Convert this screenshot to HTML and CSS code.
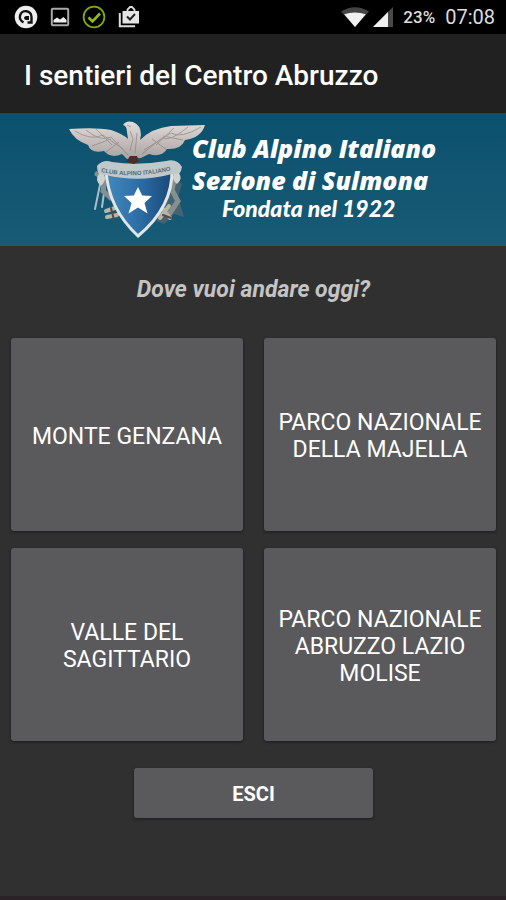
FILE: index.html
```html
<!DOCTYPE html>
<html lang="it">
<head>
<meta charset="utf-8">
<meta name="viewport" content="width=device-width, initial-scale=1">
<title>I sentieri del Centro Abruzzo</title>
<link rel="stylesheet" href="styles.css">
</head>
<body>
<div class="status">
  <div class="status-group notices">
    <svg width="24" height="24" viewBox="0 0 24 24"><circle cx="12" cy="12" r="11.300" fill="#eee"/><path d="M9.500 17.300A5.800 5.800 0 1 1 17.500 12V17.500H13.500" fill="none" stroke="#111" stroke-width="2.400"/><circle cx="12" cy="12.300" r="3.200" fill="#eee"/><path d="M12 11h3v4h-3q-2-.3-2-2t2-2z" fill="#111"/></svg>
    <svg width="20" height="20" viewBox="0 0 20 20"><rect x="1.800" y="1.800" width="16.400" height="16.400" rx="1" fill="none" stroke="#a9a9a9" stroke-width="2"/><path d="M3.500 15.500V13L7 10.500l3 2 3.500-2.500L16.500 13v2.500z" fill="#eee"/></svg>
    <svg width="24" height="24" viewBox="0 0 24 24"><circle cx="12" cy="12" r="10.400" fill="none" stroke="#83a80d" stroke-width="1.800"/><path d="M6.500 12.500l4 4L18 8.500" fill="none" stroke="#94ba12" stroke-width="2.600"/></svg>
    <svg width="22" height="22" viewBox="0 0 22 22"><path d="M1.800 7v13.200H17" fill="none" stroke="#ddd" stroke-width="2"/><path d="M9.500 5V3.500L12 1h2l2.500 2.500V5" fill="none" stroke="#ddd" stroke-width="1.800"/><path d="M4.500 5H21v12.500H4.500z" fill="#e5e5e5"/><path d="M9 10.500l3 3L17 8" fill="none" stroke="#222" stroke-width="2"/></svg>
  </div>
  <div class="status-group">
    <svg width="28" height="20" viewBox="0 0 28 20"><path d="M0 4.500Q14-4 28 4.500L14 20z" fill="#444"/><path d="M3.200 7.300Q14 3.500 24.800 7.300L14 20z" fill="#f1f1f1"/></svg>
    <svg width="20" height="20" viewBox="0 0 20 20"><path d="M20 0v20H0z" fill="#484848"/><path d="M15 5v15H0z" fill="#f1f1f1"/></svg>
    <span class="battery">23%</span>
    <span class="clock">07:08</span>
  </div>
</div>
<header class="appbar"><h1>I sentieri del Centro Abruzzo</h1></header>
<div class="banner">
  <svg class="crest" width="140" height="118" viewBox="0 0 140 118" aria-hidden="true">
    <defs>
      <linearGradient id="blue" x2="1" y2="0"><stop offset="0" stop-color="#4289bd"/><stop offset=".5" stop-color="#2d6da6"/><stop offset="1" stop-color="#194877"/></linearGradient>
      <linearGradient id="feather" x2="0" y2="1"><stop offset="0" stop-color="#e2dcda"/><stop offset="1" stop-color="#a9a2a1"/></linearGradient>
      <path id="ribbon" d="M39 52Q75 60 119 48"/>
    </defs>
    <path d="M111 55l9 9-4 13 6 20-10-3-10 10-8-3 10-22z" fill="#58696f" opacity=".7"/>
    <g fill="none" stroke-linecap="round">
      <path d="M40 55l-7 34M43 66l-3 21" stroke="#adbcc5" stroke-width="2"/>
      <path d="M35 54l8 5-2 12 8 7M113 56l-3 14 6 11-8 12" stroke="#86908f" stroke-width="5"/>
      <path d="M44 91l9-3M45 97l10-2M100 88l8 10M107 86l-9 12" stroke="#b7b4aa" stroke-width="4"/>
      <path d="M49 88l3 12M101 95l8 3" stroke="#574a43" stroke-width="2"/>
    </g>
    <path d="M7 9Q34 7 49 10Q61 14 66 19L65 12Q65 6 61 5Q64 0 71 2Q79 5 79 15L78 20Q90 8 109 6L143 5Q139 18 123 20Q119 30 105 29Q99 38 87 34L79 38L65 39L60 34Q49 39 42 31Q29 34 26 25Q12 20 7 9z" fill="url(#feather)"/>
    <g fill="none" stroke="#857d7b" stroke-width="1" opacity=".6">
      <path d="M13 11q16 10 28 4l20 14M24 10q14 12 25 7l17 18M34 9l16 16M30 26l19-7M44 32l13-10M139 7q-20 12-30 6L82 30M126 7q-18 15-26 11L80 34M112 8L94 25M121 20l-20-4M105 30l-15-11"/>
      <path d="M68 11l3 8-3 12M75 13l-2 20M65 5l4 2"/>
    </g>
    <path d="M44 50Q60 50 75 50Q92 50 110 49Q111 87 76 116Q46 88 44 50z" fill="url(#blue)" stroke="#e0e5e6" stroke-width="3"/>
    <path d="M35 46Q41 39 50 42Q75 46 104 41Q115 38 120 47Q118 58 110 54Q77 63 44 55Q35 58 35 46z" fill="#c1c8c9"/>
    <path d="M64 42l4-6h7l2 5-5 3z" fill="#502a2c"/>
    <text class="ribbon-text"><textPath href="#ribbon">CLUB ALPINO ITALIANO</textPath></text>
    <path d="M117 53q4 6-2 11-6-5-3-10zM37 54q-5 6 2 12 6-6 3-11z" fill="#d0d2ce"/>
    <path d="M76 67l4.200 8.500 9.800.5-7.500 7 3 10.500-9.500-6-9.500 6 3-10.500-7.500-7 9.800-.5z" fill="#fff"/>
  </svg>
  <div class="club">
    <p>Club Alpino Italiano</p>
    <p>Sezione di Sulmona</p>
    <p class="founded">Fondata nel 1922</p>
  </div>
</div>
<main>
  <h2>Dove vuoi andare oggi?</h2>
  <div class="areas">
    <button type="button">MONTE GENZANA</button>
    <button type="button">PARCO NAZIONALE DELLA MAJELLA</button>
    <button type="button">VALLE DEL SAGITTARIO</button>
    <button type="button">PARCO NAZIONALE ABRUZZO LAZIO MOLISE</button>
  </div>
  <button type="button" class="exit">ESCI</button>
</main>
</body>
</html>
```
FILE: styles.css
```css
* {
  box-sizing: border-box;
}

body {
  display: flex;
  flex-direction: column;
  min-height: 100vh;
  margin: 0;
  background: #303030;
  color: #fff;
  font-family: Roboto, sans-serif;
}

h1,
h2,
p {
  margin: 0;
}

.status {
  display: flex;
  justify-content: space-between;
  align-items: center;
  height: 34px;
  padding: 0 11px 0 14px;
  background: #000;
  color: #ddd;
}

.status-group {
  display: flex;
  align-items: center;
  gap: 4px;
}

.notices {
  gap: 12px;
}

.battery {
  margin-left: 6px;
  font-size: 17px;
  font-weight: 500;
}

.clock {
  margin-left: 6px;
  font-size: 20px;
  line-height: 24px;
}

.appbar {
  padding: 26px 24px 21px;
  background: #212121;
}

h1 {
  font-size: 28px;
  line-height: 32px;
  font-weight: 500;
}

.banner {
  display: flex;
  align-items: flex-start;
  height: 133px;
  padding: 7px 0 0 62px;
  background: linear-gradient(#0b506d, #175b76);
}

.crest {
  flex: none;
  overflow: visible;
}

.ribbon-text {
  fill: #526a77;
  font: bold 6px "Liberation Sans", sans-serif;
}

.club {
  margin-left: -10px;
  padding-top: 12px;
  font: italic 800 25px/32px "Open Sans", sans-serif;
  white-space: nowrap;
}

.founded {
  padding-left: 30px;
  font-family: Lato, sans-serif;
  font-weight: 900;
  font-size: 23px;
  line-height: 24px;
}

main {
  display: flex;
  flex: 1;
  flex-direction: column;
  align-items: center;
  padding: 28px 10px 0 11px;
  border-bottom: 4px solid #2a2227;
}

h2 {
  color: #c4c4c4;
  font-size: 23px;
  font-style: italic;
  font-weight: 700;
  line-height: 32px;
}

.areas {
  display: grid;
  grid-template-columns: 1fr 1fr;
  grid-auto-rows: 193px;
  gap: 17px 21px;
  width: 100%;
  margin: 32px 0 27px;
}

button {
  padding: 3px 8px 0;
  border: 0;
  border-radius: 3px;
  background: #5a5a5c;
  box-shadow: 0 1px 3px #1b1b1b;
  color: #fff;
  font: 23px/27px Roboto, sans-serif;
}

.exit {
  width: 239px;
  height: 50px;
  font-size: 20px;
  font-weight: 700;
}
```
